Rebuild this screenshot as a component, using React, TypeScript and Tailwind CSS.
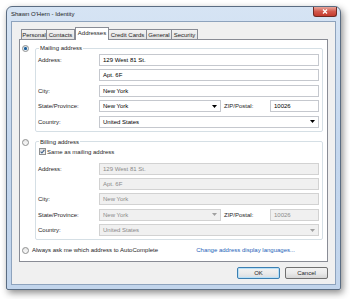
import React from 'react';

const Radio = ({ checked }: { checked?: boolean }) => (
  <span className="flex h-[7px] w-[7px] shrink-0 items-center justify-center rounded-full border border-[#8e8f8f] bg-gradient-to-b from-[#e6e6e6] to-[#fafafa]">
    {checked && <span className="h-[3px] w-[3px] rounded-full bg-[#1d5b94] shadow-[0_0_1px_#4aa3e0]" />}
  </span>
);

const Arrow = ({ disabled }: { disabled?: boolean }) => (
  <svg width="5" height="3" viewBox="0 0 5 3" className="ml-auto mr-[3px]">
    <path d="M0 0h5L2.5 3z" fill={disabled ? '#a0a0a0' : '#000'} />
  </svg>
);

const Box = ({
  value,
  disabled,
  select,
  className = 'w-[220px]',
}: {
  value?: string;
  disabled?: boolean;
  select?: boolean;
  className?: string;
}) => (
  <div
    className={`flex h-[12px] items-center border pl-[3px] ${className} ${
      disabled ? 'border-[#d2d2d2] bg-[#f0f0f0] text-[#8a8a8a]' : 'border-[#c5c8ce] bg-white text-black'
    }`}
  >
    <span>{value}</span>
    {select && <Arrow disabled={disabled} />}
  </div>
);

const AddressFields = ({ disabled }: { disabled?: boolean }) => (
  <div className="flex flex-col gap-[3.4px]">
    <div className="flex items-center">
      <span className="w-[61px]">Address:</span>
      <Box value="129 West 81 St." disabled={disabled} />
    </div>
    <div className="flex items-center">
      <span className="w-[61px]" />
      <Box value="Apt. 6F" disabled={disabled} />
    </div>
    <div className="flex items-center">
      <span className="w-[61px]">City:</span>
      <Box value="New York" disabled={disabled} />
    </div>
    <div className="flex items-center">
      <span className="w-[61px]">State/Province:</span>
      <Box value="New York" disabled={disabled} select className="w-[122px]" />
      <span className="ml-[3px] w-[46px]">ZIP/Postal:</span>
      <Box value="10026" disabled={disabled} className="w-[49px]" />
    </div>
    <div className="flex items-center">
      <span className="w-[61px]">Country:</span>
      <Box value="United States" disabled={disabled} select />
    </div>
  </div>
);

const tabs = [
  { name: 'Personal', w: 'w-[26px]' },
  { name: 'Contacts', w: 'w-[29px]' },
  { name: 'Addresses', w: 'w-[34px]', active: true },
  { name: 'Credit Cards', w: 'w-[39px]' },
  { name: 'General', w: 'w-[26px]' },
  { name: 'Security', w: 'w-[27px]' },
];

export default function App() {
  return (
    <div className="h-[299px] w-[350px] overflow-hidden bg-white pl-[6px] pt-[6px] font-['Liberation_Sans',Arial,sans-serif] text-[6px] leading-[8px] text-[#1e1e1e]">
      <div className="flex h-[284px] w-[335px] flex-col rounded-t-[6px] rounded-b-[2px] border border-[#5a6c82] bg-gradient-to-b from-[#d6e4f4] via-[#c4d7ee] to-[#c2d5ec] shadow-[2px_3px_7px_rgba(0,0,0,0.45)]">
        {/* title bar */}
        <div className="flex h-[14px] items-start justify-between pl-[4px] pr-[3px]">
          <span className="mt-[3px] text-[#1a1a1a]">Shawn O'Hern - Identity</span>
          <div className="flex h-[10px] w-[24px] items-center justify-center rounded-b-[3px] border border-t-0 border-[#6d2a24] bg-gradient-to-b from-[#e8a69c] via-[#d2584c] to-[#c43a2c]">
            <svg width="6" height="5" viewBox="0 0 6 5">
              <path d="M1 0.5l4 4M5 0.5l-4 4" stroke="#fff" strokeWidth="1.3" />
            </svg>
          </div>
        </div>

        {/* client */}
        <div className="mx-[4px] mb-[4px] flex flex-1 flex-col border border-[#8ea3bd] bg-[#f0f0f0] pl-[7px] pr-[7px] pt-[5px]">
          {/* tabs */}
          <div className="flex h-[12px] items-end pl-[2px]">
            {tabs.map((t) =>
              t.active ? (
                <div
                  key={t.name}
                  className={`${t.w} z-10 -mb-[1px] flex h-[13px] items-start justify-center border border-b-0 border-[#898c95] bg-white pt-[1px]`}
                >
                  {t.name}
                </div>
              ) : (
                <div
                  key={t.name}
                  className={`${t.w} -ml-px flex h-[10px] items-center justify-center border border-b-0 border-[#898c95] bg-gradient-to-b from-[#f3f3f3] to-[#e3e3e3] first:ml-0`}
                >
                  {t.name}
                </div>
              ),
            )}
          </div>

          {/* panel */}
          <div className="flex h-[223px] w-[309px] flex-col border border-[#898c95] bg-white pl-[2px] pr-[4px] pt-[4px]">
            {/* mailing */}
            <div className="flex">
              <div className="mt-[1px]">
                <Radio checked />
              </div>
              <fieldset className="ml-[6px] flex-1 rounded-[2px] border border-[#d5dfe5] px-[2px] pb-[3px] pt-[2px]">
                <legend className="ml-[1px] px-[1px]">Mailing address</legend>
                <AddressFields />
              </fieldset>
            </div>

            {/* billing */}
            <div className="mt-[6px] flex">
              <div className="mt-[1px]">
                <Radio />
              </div>
              <fieldset className="ml-[6px] flex-1 rounded-[2px] border border-[#d5dfe5] px-[2px] pb-[3px] pt-[2px]">
                <legend className="ml-[1px] px-[1px]">Billing address</legend>
                <div className="mb-[7px] flex h-[8px] items-center pl-[1px]">
                  <span className="flex h-[7px] w-[7px] items-center justify-center border border-[#8e8f8f] bg-gradient-to-b from-[#dcdcdc] to-[#f6f6f6]">
                    <svg width="5" height="5" viewBox="0 0 5 5">
                      <path d="M0.6 2.6l1.3 1.4L4.4 0.8" stroke="#3c5f8a" strokeWidth="1.1" fill="none" />
                    </svg>
                  </span>
                  <span className="ml-[1px]">Same as mailing address</span>
                </div>
                <AddressFields disabled />
              </fieldset>
            </div>

            {/* bottom row */}
            <div className="mt-[6px] flex h-[8px] items-center">
              <Radio />
              <span className="ml-[3px]">Always ask me which address to AutoComplete</span>
              <span className="ml-auto mr-[28px] text-[#1c62b8]">Change address display languages...</span>
            </div>
          </div>

          {/* buttons */}
          <div className="mt-[5px] flex justify-end gap-[5px] pr-0">
            <button className="h-[12px] w-[43px] rounded-[2px] border border-[#3c7fb1] bg-gradient-to-b from-[#f2f2f2] via-[#ebebeb] to-[#d8dde2] text-[6px] leading-[8px] shadow-[inset_0_0_0_1px_#b8e0f8]">
              OK
            </button>
            <button className="h-[12px] w-[43px] rounded-[2px] border border-[#707070] bg-gradient-to-b from-[#f2f2f2] via-[#ebebeb] to-[#d6d6d6] text-[6px] leading-[8px]">
              Cancel
            </button>
          </div>
        </div>
      </div>
    </div>
  );
}
